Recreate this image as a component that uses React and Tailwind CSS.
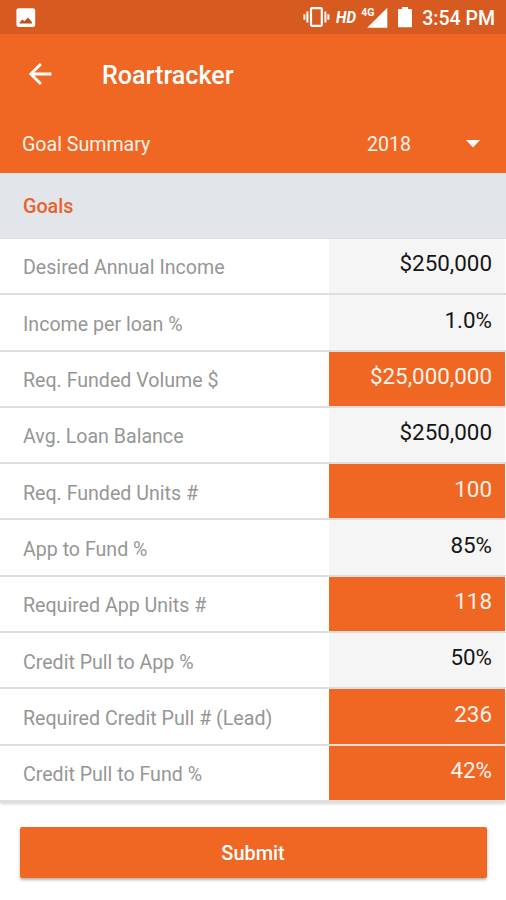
const goals = [
  { label: 'Desired Annual Income', value: '$250,000' },
  { label: 'Income per loan %', value: '1.0%' },
  { label: 'Req. Funded Volume $', value: '$25,000,000', computed: true },
  { label: 'Avg. Loan Balance', value: '$250,000' },
  { label: 'Req. Funded Units #', value: '100', computed: true },
  { label: 'App to Fund %', value: '85%' },
  { label: 'Required App Units #', value: '118', computed: true },
  { label: 'Credit Pull to App %', value: '50%' },
  { label: 'Required Credit Pull # (Lead)', value: '236', computed: true },
  { label: 'Credit Pull to Fund %', value: '42%', computed: true },
];

function StatusBar() {
  return (
    <div className="flex h-[34px] items-center bg-[#d75b20] pl-4 pr-[11px] text-white">
      <svg className="mt-px h-5 w-5" viewBox="0 0 20 20">
        <rect x="0.4" y="0.3" width="18.8" height="18.6" rx="2.2" fill="#fff" />
        <path d="M3.6 15.6v-1.2l2.6-3 2.3 1.9 3.6-3.9 3.9 4.9v1.3z" fill="#c94f18" />
      </svg>
      <svg className="ml-auto h-[22px] w-[27px]" viewBox="0 0 27 22">
        <rect x="8" y="2.2" width="10.8" height="17.6" rx="1" fill="none" stroke="#fff" strokeWidth="2.2" />
        <path d="M4.4 5.5v11M1.4 8.2v5.6M22.4 5.5v11M25.4 8.2v5.6" stroke="#fff" strokeWidth="2" />
      </svg>
      <span className="ml-[6px] mt-[2px] w-[21px] whitespace-nowrap text-[16px] font-bold italic leading-none">
        <span className="inline-block origin-left scale-x-[0.95]">HD</span>
      </span>
      <div className="relative ml-[5px] mt-px h-[22px] w-[26px]">
        <span className="absolute left-[-1px] top-[1px] text-[10.5px] font-bold leading-none">4G</span>
        <svg className="h-[22px] w-[26px]" viewBox="0 0 26 22">
          <path d="M25.3 0.8v20H5.2z" fill="#fff" />
        </svg>
      </div>
      <svg className="ml-[10px] h-[22px] w-[14px]" viewBox="0 0 14 22">
        <path d="M1 3h3V1h6v2h3.2q.8 0 .8.8v16.7q0 .8-.8.8H.8q-.8 0-.8-.8V3.8q0-.8 1-.8z" fill="#fff" />
      </svg>
      <span className="ml-[10px] mt-[3px] whitespace-nowrap text-[19.5px] font-medium leading-none">3:54 PM</span>
    </div>
  );
}

function GoalRow({ label, value, computed }) {
  return (
    <div className="flex flex-1 border-b-2 border-[#dedede]">
      <div className="flex flex-1 items-center whitespace-nowrap pl-[23px] pt-[4px] text-[19.6px] text-[#969696]">
        {label}
      </div>
      <div
        className={`mr-px w-[176px] pr-[13px] pt-[8.4px] text-right text-[22.4px] leading-[32px] ${
          computed ? 'bg-[#f06623] text-[#fff3ec]' : 'bg-[#f5f5f5] text-[#151515]'
        }`}
      >
        {value}
      </div>
    </div>
  );
}

export default function App() {
  return (
    <div className="flex h-[900px] w-[506px] flex-col overflow-hidden bg-white font-['Roboto',sans-serif]">
      <StatusBar />
      <header className="h-[139px] bg-[#f06623] text-white">
        <div className="flex h-[81px] items-center pl-[28px]">
          <svg className="mb-px h-6 w-6" viewBox="0 0 24 24" fill="none" stroke="#fff" strokeWidth="2.8">
            <path d="M12.9 1.9 2.8 12l10.1 10.1M2.8 12h20.6" />
          </svg>
          <h1 className="ml-[50px] mt-[2px] text-[25.1px] font-medium leading-none">Roartracker</h1>
        </div>
        <div className="flex h-[58px] items-center pl-[22px] pr-[26px] pt-[2px] text-[19.6px] text-[#fff3ec]">
          <span>Goal Summary</span>
          <span className="ml-auto">2018</span>
          <svg className="ml-[55px] mt-[-2px] h-[8px] w-[14px]" viewBox="0 0 14 8">
            <path d="M0 0h14L7 7.5z" fill="#fff" />
          </svg>
        </div>
      </header>
      <h2 className="flex h-[66px] items-center border-b border-[#dcdedf] bg-[#e2e6ea] pl-[23px] pt-[2px] text-[19.7px] font-medium text-[#e8622a]">
        Goals
      </h2>
      <main className="flex h-[563px] flex-col shadow-[0_2px_3px_rgba(0,0,0,0.16)]">
        {goals.map((goal) => (
          <GoalRow key={goal.label} {...goal} />
        ))}
      </main>
      <button className="mx-auto mt-[25px] h-[51px] w-[467px] rounded-[2px] bg-[#f06623] pt-[2px] text-[19.9px] font-medium text-white shadow-[0_2px_3px_rgba(0,0,0,0.3)]">
        Submit
      </button>
    </div>
  );
}
